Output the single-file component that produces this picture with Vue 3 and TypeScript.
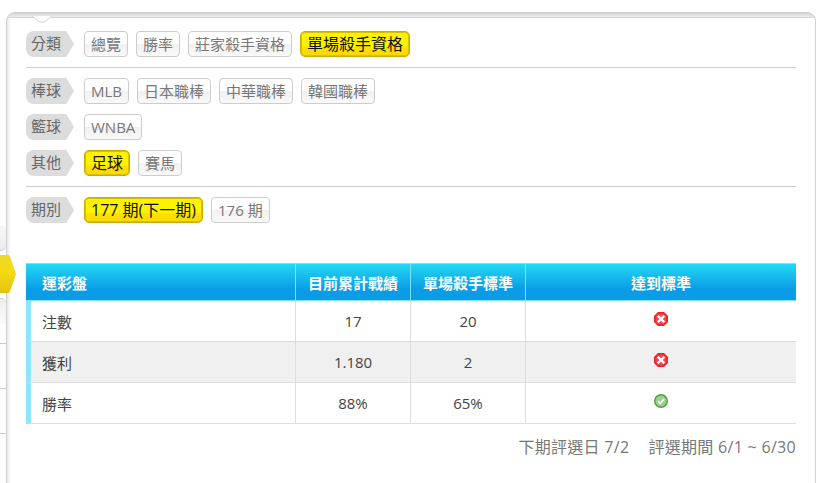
<script setup lang="ts">
interface Tag { text: string; on?: boolean }
interface Group { label: string; tags: Tag[] }

const topRow: Group = {
  label: '分類',
  tags: [{ text: '總覽' }, { text: '勝率' }, { text: '莊家殺手資格' }, { text: '單場殺手資格', on: true }],
}
const sportRows: Group[] = [
  { label: '棒球', tags: [{ text: 'MLB' }, { text: '日本職棒' }, { text: '中華職棒' }, { text: '韓國職棒' }] },
  { label: '籃球', tags: [{ text: 'WNBA' }] },
  { label: '其他', tags: [{ text: '足球', on: true }, { text: '賽馬' }] },
]
const periodRow: Group = {
  label: '期別',
  tags: [{ text: '177 期(下一期)', on: true }, { text: '176 期' }],
}
const rows = [
  { name: '注數', a: '17', b: '20', ok: false },
  { name: '獲利', a: '1.180', b: '2', ok: false },
  { name: '勝率', a: '88%', b: '65%', ok: true },
]
</script>

<template>
  <div class="page">
    <aside class="side">
      <div class="side-btn first"></div>
      <div class="side-hex"></div>
      <div class="side-btn second"></div>
      <div class="side-line l1"></div>
      <div class="side-line l2"></div>
      <div class="side-line l3"></div>
    </aside>
    <main class="panel">
      <svg class="notch" width="20" height="8" viewBox="0 0 20 8">
        <path d="M0 0 L7 5.5 Q10 7.5 13 5.5 L20 0 Z" fill="#fff" />
        <path d="M0 0 L7 5.5 Q10 7.5 13 5.5 L20 0" fill="none" stroke="#d4d4d4" />
      </svg>
      <div class="row">
        <span class="label">{{ topRow.label }}</span>
        <span v-for="t in topRow.tags" :key="t.text" class="tag" :class="{ on: t.on }">{{ t.text }}</span>
      </div>
      <hr class="rule" />
      <div v-for="g in sportRows" :key="g.label" class="row">
        <span class="label">{{ g.label }}</span>
        <span v-for="t in g.tags" :key="t.text" class="tag" :class="{ on: t.on }">{{ t.text }}</span>
      </div>
      <hr class="rule" />
      <div class="row">
        <span class="label">{{ periodRow.label }}</span>
        <span v-for="t in periodRow.tags" :key="t.text" class="tag" :class="{ on: t.on }">{{ t.text }}</span>
      </div>

      <table class="grid">
        <thead>
          <tr>
            <th class="c0">運彩盤</th>
            <th class="c1">目前累計戰績</th>
            <th class="c2">單場殺手標準</th>
            <th class="c3">達到標準</th>
          </tr>
        </thead>
        <tbody>
          <tr v-for="r in rows" :key="r.name">
            <td class="c0">{{ r.name }}</td>
            <td class="c1">{{ r.a }}</td>
            <td class="c2">{{ r.b }}</td>
            <td class="c3">
              <svg v-if="!r.ok" class="icon" width="14" height="14" viewBox="0 0 14 14">
                <polygon points="4,0 10,0 14,4 14,10 10,14 4,14 0,10 0,4" fill="#ee1c25" />
                <polygon points="4.5,1.5 9.5,1.5 12.5,4.5 12.5,9.5 9.5,12.5 4.5,12.5 1.5,9.5 1.5,4.5" fill="#f4444c" />
                <path d="M4.6 4.6 9.4 9.4M9.4 4.6 4.6 9.4" stroke="#fff" stroke-width="2.4" stroke-linecap="square" />
              </svg>
              <svg v-else class="icon" width="14" height="14" viewBox="0 0 14 14">
                <circle cx="7" cy="7" r="7" fill="#4f9e3f" />
                <circle cx="7" cy="7" r="5.6" fill="#9ad18a" />
                <path d="M4 7.2 6.2 9.4 10 5.2" fill="none" stroke="#fff" stroke-width="1.8" />
              </svg>
            </td>
          </tr>
        </tbody>
      </table>
      <p class="foot"><span>下期評選日 7/2</span><span>評選期間 6/1 ~ 6/30</span></p>
    </main>
  </div>
</template>

<style>
html, body { background: #fff; overflow: hidden; }
</style>

<style scoped>
.page {
  display: flex;
  width: 821px;
  height: 483px;
  padding-top: 12px;
  box-sizing: border-box;
  font-family: "Open Sans", "Noto Sans CJK TC", sans-serif;
  font-size: 15px;
  color: #333;
  overflow: hidden;
}
.side { position: relative; width: 6px; flex: none; }
.side-btn {
  position: absolute;
  left: -10px;
  width: 16px;
  height: 25px;
  background: linear-gradient(#f8f8f8, #ececec);
  border-radius: 5px;
}
.first { top: 213px; border-bottom: 1px solid #ccc; }
.second { top: 286px; border-top: 1px solid #ccc; background: linear-gradient(#eee, #fbfbfb); border-radius: 5px 5px 0 0; }
.side-line { position: absolute; left: 0; width: 6px; height: 1px; background: #ccc; }
.l1 { top: 331px; }
.l2 { top: 376px; }
.l3 { top: 421px; }
.side-hex {
  position: absolute;
  z-index: 2;
  left: -2px;
  top: 243px;
  width: 18px;
  height: 38px;
  background: linear-gradient(#ecd92a, #f4dc10 40%, #e3c414);
  clip-path: polygon(0 0, 60% 0, 68% 6%, 100% 50%, 68% 94%, 60% 100%, 0 100%);
}
.panel {
  position: relative;
  width: 810px;
  height: 520px;
  flex: none;
  box-sizing: border-box;
  padding: 18px 19px 0 19px;
  border: 1px solid #cfcfcf;
  border-radius: 9px 9px 0 0;
  background:
    linear-gradient(#d4d4d4, #ececec 4px, #d6d6d6 4px, #d6d6d6 5px, transparent 5px),
    linear-gradient(90deg, #e8e8e8, #fff 4px);
}
.notch {
  position: absolute;
  left: 25px;
  top: 3px;
  overflow: visible;
}
.row { display: flex; align-items: center; gap: 8px; height: 26px; margin-bottom: 10px; }
.label {
  width: 48px;
  height: 26px;
  margin-right: 2px;
  padding-left: 5px;
  box-sizing: border-box;
  line-height: 25px;
  color: #666;
  background: #dcdcdc;
  border-radius: 8px 0 0 8px;
  clip-path: polygon(0 0, 84% 0, 100% 50%, 84% 100%, 0 100%);
}
.tag {
  height: 26px;
  box-sizing: border-box;
  padding: 0 6px;
  line-height: 24px;
  color: #777;
  border: 1px solid #ccc;
  border-radius: 4px;
  background: linear-gradient(#fff 50%, #f1f1f1 52%, #f9f9f9);
  white-space: nowrap;
}
.tag.on {
  color: #111;
  font-size: 16px;
  border-color: #c9ac00;
  border-radius: 5px;
  background: linear-gradient(#fff200 60%, #ffe000 64%, #f8d800);
  box-shadow: inset 0 0 0 1px #dcc000;
}
.rule { border: none; height: 1px; background: #ccc; margin: 0 0 10px; }
.grid {
  margin-top: 40px;
  width: 770px;
  table-layout: fixed;
  border-collapse: separate;
  border-spacing: 0;
  font-size: 15px;
}
th, td { box-sizing: border-box; padding: 0; }
.c0 { width: 269px; text-align: left; }
.c1 { width: 115px; }
.c2 { width: 115px; }
th {
  height: 38px;
  color: #fff;
  font-weight: 700;
  background: linear-gradient(#24d8f4, #0a9ce6 70%);
  border-top: 1px solid #7fe2f6;
  border-bottom: 1px solid #7fe2f6;
  border-left: 1px solid #7fe2f6;
}
th.c0 { border-left: none; padding-left: 16px; }
td {
  height: 41px;
  text-align: center;
  color: #444;
  border-bottom: 1px solid #ddd;
  border-left: 1px solid #ddd;
}
td.c0 { text-align: left; padding-left: 11px; border-left: 5px solid #8ce6ff; }
tbody tr:nth-child(2) td { background: #f0f0f0; }
.icon { display: inline-block; vertical-align: middle; margin-top: -8px; }
.foot {
  display: flex;
  justify-content: flex-end;
  gap: 19px;
  margin: 10px 0 0;
  color: #777;
  font-size: 16px;
  letter-spacing: 0.3px;
}
</style>
